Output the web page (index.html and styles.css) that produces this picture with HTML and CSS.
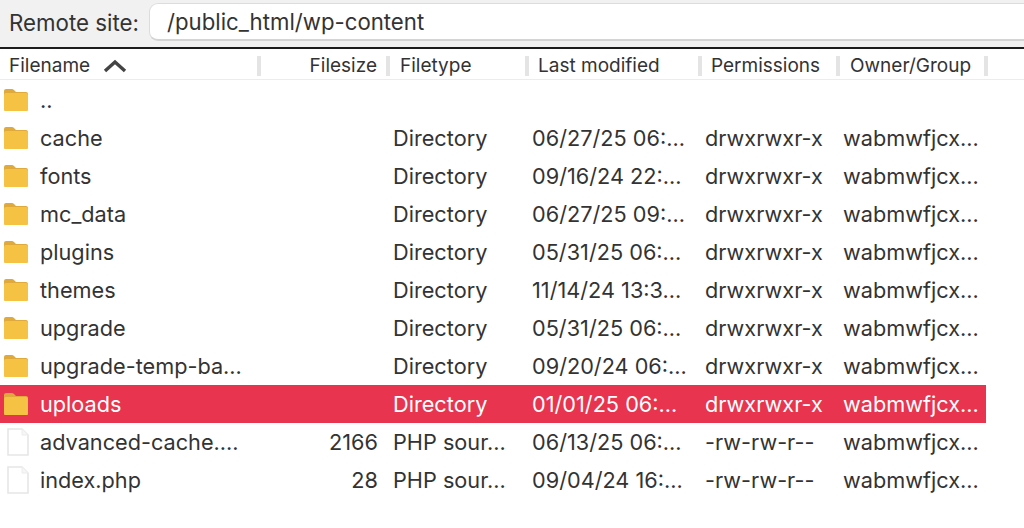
FILE: index.html
```html
<!DOCTYPE html>
<html lang="en">
<head>
    <meta charset="UTF-8">
    <title>Remote site</title>
    <link rel="stylesheet" href="styles.css">
</head>
<body>
    <svg class="defs" width="0" height="0">
        <symbol id="folder" viewBox="0 0 26 24">
            <path d="M1 5V3q0-2 2-2h6q1 0 2 1l2 2h10q2 0 2 2v1H1z" fill="#dfa93c"/>
            <path d="M1 7q0-2 2-2h20q2 0 2 2v15q0 1-1 1H2q-1 0-1-1z" fill="#f6c244"/>
        </symbol>
        <symbol id="file" viewBox="0 0 24 28">
            <path d="M2 1h14l6 6v20H2z" fill="#fff" stroke="#e6e6e6" stroke-width="1.6"/>
            <path d="M16 1v6h6" fill="#f6f6f6" stroke="#ececec" stroke-width="1"/>
        </symbol>
    </svg>

    <div class="site-bar">
        <label class="site-label">Remote site:</label>
        <div class="site-path">/public_html/wp-content</div>
    </div>

    <div class="col-head">
        <div class="head-cell c-name">Filename
            <svg class="sort" width="24" height="14" viewBox="0 0 24 14"><path d="M2 12l10-9 10 9" fill="none" stroke="#444" stroke-width="3.4"/></svg>
        </div>
        <div class="head-cell c-size">Filesize</div>
        <div class="head-cell c-type">Filetype</div>
        <div class="head-cell c-date">Last modified</div>
        <div class="head-cell c-perm">Permissions</div>
        <div class="head-cell c-owner">Owner/Group</div>
    </div>

    <div class="rows">
        <div class="row">
            <div class="c-name"><svg class="ico"><use href="#folder"/></svg>..</div>
        </div>
        <div class="row">
            <div class="c-name"><svg class="ico"><use href="#folder"/></svg>cache</div>
            <div class="c-size"></div>
            <div class="c-type">Directory</div>
            <div class="c-date">06/27/25 06:...</div>
            <div class="c-perm">drwxrwxr-x</div>
            <div class="c-owner">wabmwfjcx...</div>
        </div>
        <div class="row">
            <div class="c-name"><svg class="ico"><use href="#folder"/></svg>fonts</div>
            <div class="c-size"></div>
            <div class="c-type">Directory</div>
            <div class="c-date">09/16/24 22:...</div>
            <div class="c-perm">drwxrwxr-x</div>
            <div class="c-owner">wabmwfjcx...</div>
        </div>
        <div class="row">
            <div class="c-name"><svg class="ico"><use href="#folder"/></svg>mc_data</div>
            <div class="c-size"></div>
            <div class="c-type">Directory</div>
            <div class="c-date">06/27/25 09:...</div>
            <div class="c-perm">drwxrwxr-x</div>
            <div class="c-owner">wabmwfjcx...</div>
        </div>
        <div class="row">
            <div class="c-name"><svg class="ico"><use href="#folder"/></svg>plugins</div>
            <div class="c-size"></div>
            <div class="c-type">Directory</div>
            <div class="c-date">05/31/25 06:...</div>
            <div class="c-perm">drwxrwxr-x</div>
            <div class="c-owner">wabmwfjcx...</div>
        </div>
        <div class="row">
            <div class="c-name"><svg class="ico"><use href="#folder"/></svg>themes</div>
            <div class="c-size"></div>
            <div class="c-type">Directory</div>
            <div class="c-date">11/14/24 13:3...</div>
            <div class="c-perm">drwxrwxr-x</div>
            <div class="c-owner">wabmwfjcx...</div>
        </div>
        <div class="row">
            <div class="c-name"><svg class="ico"><use href="#folder"/></svg>upgrade</div>
            <div class="c-size"></div>
            <div class="c-type">Directory</div>
            <div class="c-date">05/31/25 06:...</div>
            <div class="c-perm">drwxrwxr-x</div>
            <div class="c-owner">wabmwfjcx...</div>
        </div>
        <div class="row">
            <div class="c-name"><svg class="ico"><use href="#folder"/></svg>upgrade-temp-ba...</div>
            <div class="c-size"></div>
            <div class="c-type">Directory</div>
            <div class="c-date">09/20/24 06:...</div>
            <div class="c-perm">drwxrwxr-x</div>
            <div class="c-owner">wabmwfjcx...</div>
        </div>
        <div class="row selected">
            <div class="c-name"><svg class="ico"><use href="#folder"/></svg>uploads</div>
            <div class="c-size"></div>
            <div class="c-type">Directory</div>
            <div class="c-date">01/01/25 06:...</div>
            <div class="c-perm">drwxrwxr-x</div>
            <div class="c-owner">wabmwfjcx...</div>
        </div>
        <div class="row">
            <div class="c-name"><svg class="ico ico-file"><use href="#file"/></svg>advanced-cache....</div>
            <div class="c-size">2166</div>
            <div class="c-type">PHP sour...</div>
            <div class="c-date">06/13/25 06:...</div>
            <div class="c-perm">-rw-rw-r--</div>
            <div class="c-owner">wabmwfjcx...</div>
        </div>
        <div class="row">
            <div class="c-name"><svg class="ico ico-file"><use href="#file"/></svg>index.php</div>
            <div class="c-size">28</div>
            <div class="c-type">PHP sour...</div>
            <div class="c-date">09/04/24 16:...</div>
            <div class="c-perm">-rw-rw-r--</div>
            <div class="c-owner">wabmwfjcx...</div>
        </div>
    </div>
</body>
</html>
```

FILE: styles.css
```css
body {
    margin: 0;
    background: white;
    font-family: Inter, "Liberation Sans", sans-serif;
    color: #333;
    overflow: hidden;
}
.defs {
    display: block;
    height: 0;
}

/* top bar */
.site-bar {
    height: 47px;
    background: #f1f1f1;
    border-bottom: 2px solid #1c1c1c;
    display: flex;
    align-items: flex-start;
    padding-left: 9px;
    overflow: hidden;
}
.site-label {
    flex: none;
    width: 140px;
    font-size: 22.3px;
    line-height: 46px;
    white-space: nowrap;
}
.site-path {
    flex: none;
    width: 890px;
    height: 35px;
    margin-top: 3px;
    padding-left: 17px;
    background: white;
    border: 1px solid #dcdcdc;
    border-bottom: 2px solid #d4d4d4;
    border-right: none;
    border-radius: 9px 0 0 9px;
    font-size: 22.2px;
    line-height: 36px;
}

/* column header */
.col-head {
    display: flex;
    height: 30px;
    border-bottom: 1px solid #ececec;
    font-size: 19px;
}
.head-cell {
    border-right: 4px solid #e4e4e4;
    height: 20px;
    margin-top: 7px;
    line-height: 20px;
    box-sizing: border-box;
    white-space: nowrap;
}
.col-head .c-name { display: block; width: 261px; padding-left: 9px; }
.col-head .c-size { width: 129px; padding-right: 9px; text-align: right; }
.col-head .c-type { width: 139px; padding-left: 10px; }
.col-head .c-date { width: 173px; padding-left: 9px; }
.col-head .c-perm { width: 138px; padding-left: 9px; }
.col-head .c-owner { width: 148px; padding-left: 10px; }
.sort {
    margin-left: 8px;
    vertical-align: -1px;
}

/* file rows */
.rows {
    padding-top: 1px;
}
.row {
    display: flex;
    height: 38px;
    width: 986px;
    font-size: 21.7px;
    line-height: 38px;
    white-space: nowrap;
}
.row.selected {
    background: #e8344e;
    color: white;
}
.c-name {
    width: 261px;
    display: flex;
    align-items: center;
}
.c-size {
    width: 117px;
    text-align: right;
}
.c-type {
    width: 154px;
    padding-left: 15px;
    box-sizing: border-box;
}
.c-date {
    width: 173px;
}
.c-perm {
    width: 138px;
}
.c-owner {
    width: 143px;
}
.ico {
    width: 26px;
    height: 24px;
    margin: 0 11px 0 3px;
    flex: none;
}
.ico-file {
    width: 24px;
    height: 28px;
    margin: 0 10px 0 6px;
}
```
